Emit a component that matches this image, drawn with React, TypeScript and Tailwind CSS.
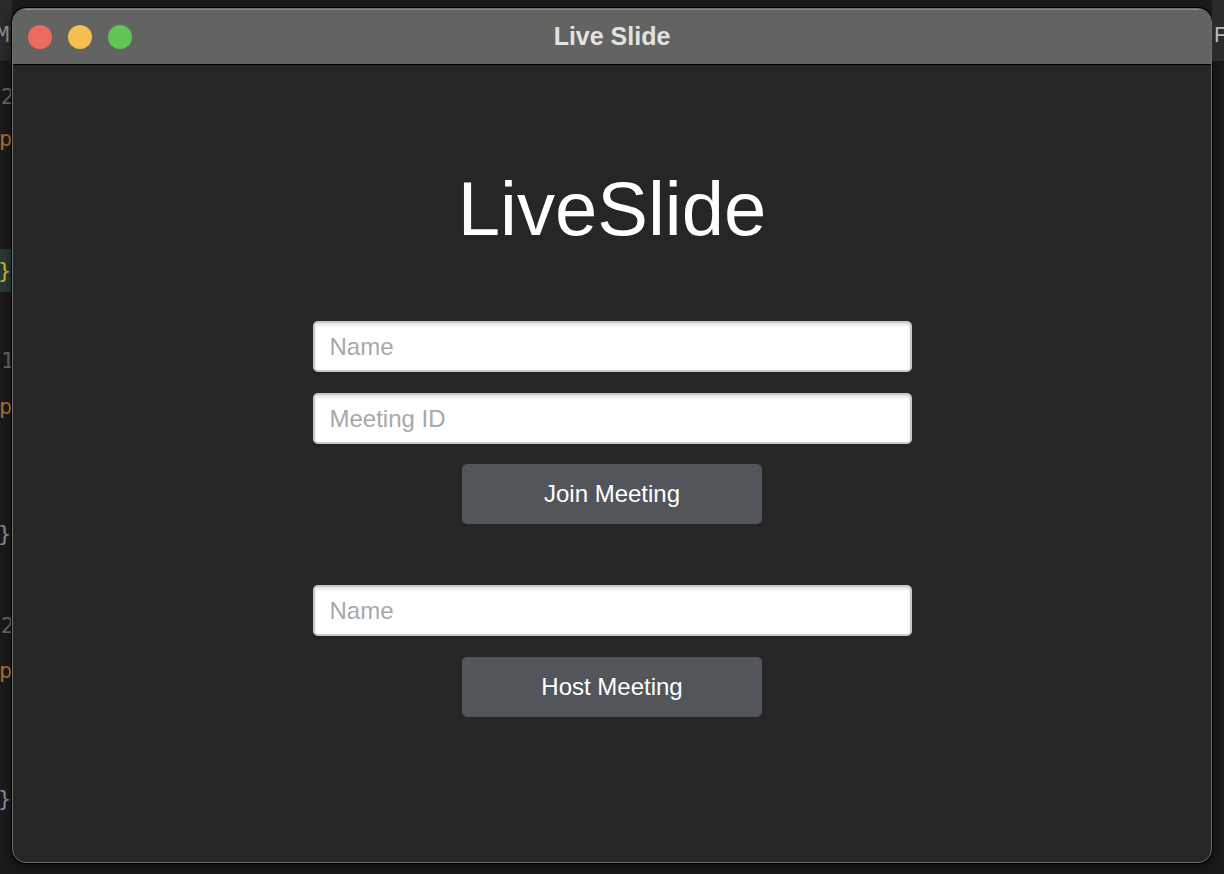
import React from 'react';

const mono = { fontFamily: '"DejaVu Sans Mono", "Liberation Mono", monospace' };

const TrafficLights: React.FC = () => (
  <div className="flex items-center gap-[16px] pl-[15px]">
    <span className="w-[24px] h-[24px] rounded-full bg-[#ee6a5f]" />
    <span className="w-[24px] h-[24px] rounded-full bg-[#f5bf4f]" />
    <span className="w-[24px] h-[24px] rounded-full bg-[#61c554]" />
  </div>
);

const LeftGutter: React.FC = () => (
  <div className="w-[12px] h-full overflow-hidden flex flex-col text-[22px] leading-[24px]" style={mono}>
    <div className="h-[62px] shrink-0 bg-[#2b2b2b] border-b border-[#181818]">
      <div className="mt-[23px] -ml-[4px] text-[#9a9a9a]">M</div>
    </div>
    <div className="mt-[23px] h-[24px] shrink-0 ml-[1px] text-[#6b6b6b]">2</div>
    <div className="mt-[18px] h-[24px] shrink-0 -ml-[1px] text-[#b06f34]">p</div>
    <div className="mt-[98px] h-[43px] shrink-0 bg-[#2c3a36] flex items-center">
      <span className="-ml-[2px] text-[#d4c02a]">{'}'}</span>
    </div>
    <div className="mt-[57px] h-[24px] shrink-0 ml-[1px] text-[#6b6b6b]">1</div>
    <div className="mt-[22px] h-[24px] shrink-0 -ml-[1px] text-[#b06f34]">p</div>
    <div className="mt-[103px] h-[24px] shrink-0 -ml-[2px] text-[#8b96a4]">{'}'}</div>
    <div className="mt-[68px] h-[24px] shrink-0 ml-[1px] text-[#6b6b6b]">2</div>
    <div className="mt-[21px] h-[24px] shrink-0 -ml-[1px] text-[#b06f34]">p</div>
    <div className="mt-[104px] h-[24px] shrink-0 -ml-[2px] text-[#8b96a4]">{'}'}</div>
  </div>
);

const RightGutter: React.FC = () => (
  <div className="w-[12px] h-full overflow-hidden flex flex-col">
    <div className="h-[62px] shrink-0 bg-[#2b2b2b] border-b border-[#181818]">
      <div
        className="mt-[23px] ml-[2px] text-[22px] leading-[24px] text-[#b8b8b8]"
        style={{ fontFamily: '"Liberation Sans", Arial, sans-serif' }}
      >
        P
      </div>
    </div>
  </div>
);

const Field: React.FC<{ placeholder: string }> = ({ placeholder }) => (
  <input
    type="text"
    placeholder={placeholder}
    className="w-[599px] h-[51px] shrink-0 bg-white rounded-[5px] border-2 border-[#c9c9c9] shadow-[inset_0_2px_3px_rgba(0,0,0,0.12)] px-[15px] text-[24px] text-[#333] placeholder:text-[#a8a8a8] outline-none"
  />
);

const Btn: React.FC<{ label: string }> = ({ label }) => (
  <button className="w-[300px] h-[60px] shrink-0 bg-[#52565a] rounded-[5px] text-white text-[24px]">
    {label}
  </button>
);

const App: React.FC = () => {
  return (
    <div
      className="w-[1224px] h-[874px] bg-[#1b1b1b] flex overflow-hidden"
      style={{ fontFamily: '"Liberation Sans", Arial, sans-serif' }}
    >
      <LeftGutter />

      <div className="mt-[8px] w-[1200px] h-[855px] shrink-0 rounded-[14px] border border-[#6e6e6e] shadow-[0_0_0_1px_#000,0_6px_16px_rgba(0,0,0,0.5)] overflow-hidden flex flex-col bg-[#262626]">
        {/* title bar */}
        <div className="h-[56px] shrink-0 bg-[#636361] border-t border-t-[#8a8a88] border-b border-b-black grid grid-cols-[1fr_auto_1fr] items-center">
          <TrafficLights />
          <div className="text-[25px] font-bold text-[#e2e2e2] leading-none -mt-[2px]">Live Slide</div>
          <div />
        </div>

        {/* content */}
        <div className="flex-1 flex flex-col items-center pt-[106px]">
          <h1 className="text-[76px] leading-none text-white font-normal">LiveSlide</h1>

          <div className="mt-[74px] flex flex-col items-center">
            <Field placeholder="Name" />
            <div className="mt-[21px]">
              <Field placeholder="Meeting ID" />
            </div>
            <div className="mt-[20px]">
              <Btn label="Join Meeting" />
            </div>
            <div className="mt-[61px]">
              <Field placeholder="Name" />
            </div>
            <div className="mt-[21px]">
              <Btn label="Host Meeting" />
            </div>
          </div>
        </div>
      </div>

      <RightGutter />
    </div>
  );
};

export default App;
